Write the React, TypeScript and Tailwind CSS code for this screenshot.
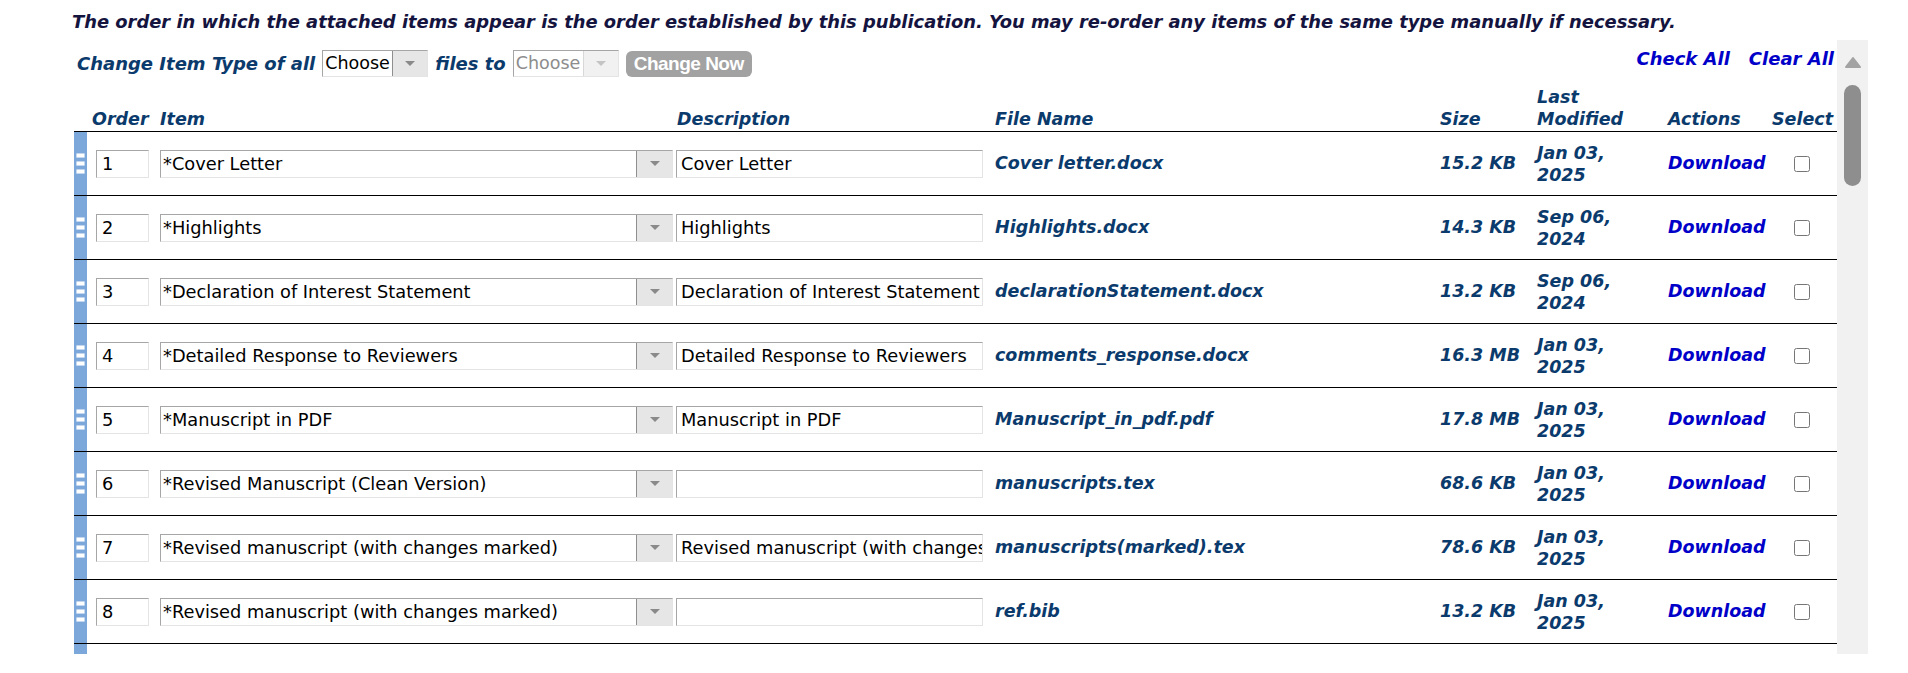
import React from 'react';

type Row = {
  order: string;
  item: string;
  desc: string;
  file: string;
  size: string;
  month: string;
  year: string;
};

const rows: Row[] = [
  { order: '1', item: '*Cover Letter', desc: 'Cover Letter', file: 'Cover letter.docx', size: '15.2 KB', month: 'Jan 03,', year: '2025' },
  { order: '2', item: '*Highlights', desc: 'Highlights', file: 'Highlights.docx', size: '14.3 KB', month: 'Sep 06,', year: '2024' },
  { order: '3', item: '*Declaration of Interest Statement', desc: 'Declaration of Interest Statement', file: 'declarationStatement.docx', size: '13.2 KB', month: 'Sep 06,', year: '2024' },
  { order: '4', item: '*Detailed Response to Reviewers', desc: 'Detailed Response to Reviewers', file: 'comments_response.docx', size: '16.3 MB', month: 'Jan 03,', year: '2025' },
  { order: '5', item: '*Manuscript in PDF', desc: 'Manuscript in PDF', file: 'Manuscript_in_pdf.pdf', size: '17.8 MB', month: 'Jan 03,', year: '2025' },
  { order: '6', item: '*Revised Manuscript (Clean Version)', desc: '', file: 'manuscripts.tex', size: '68.6 KB', month: 'Jan 03,', year: '2025' },
  { order: '7', item: '*Revised manuscript (with changes marked)', desc: 'Revised manuscript (with changes marked)', file: 'manuscripts(marked).tex', size: '78.6 KB', month: 'Jan 03,', year: '2025' },
  { order: '8', item: '*Revised manuscript (with changes marked)', desc: '', file: 'ref.bib', size: '13.2 KB', month: 'Jan 03,', year: '2025' },
];

function Caret({ light }: { light?: boolean }) {
  return (
    <svg width="12" height="7" viewBox="0 0 12 7">
      <polygon points="1,1 11,1 6,6" fill={light ? '#c4c4c4' : '#8a8a8a'} />
    </svg>
  );
}

function FakeSelect({ text, width, disabled }: { text: string; width: string; disabled?: boolean }) {
  return (
    <div
      className={`flex h-[27px] ${width} border border-t-[#a6a6a6] border-l-[#a6a6a6] border-r-[#e4e4e4] border-b-[#e4e4e4] bg-white`}
    >
      <span className={`flex-1 truncate pl-[2px] leading-[25px] ${disabled ? 'text-[#8d8d8d]' : 'text-black'}`}>{text}</span>
      <span
        className={`flex w-[35px] items-center justify-center border-l ${
          disabled ? 'border-l-[#d8d8d8] bg-[#f1f1f1]' : 'border-l-[#8f8f8f] bg-[#e6e6e6]'
        }`}
      >
        <Caret light={disabled} />
      </span>
    </div>
  );
}

const inset =
  'border border-t-[#a6a6a6] border-l-[#a6a6a6] border-r-[#e4e4e4] border-b-[#e4e4e4] bg-white h-[28px] text-[17.8px] text-black outline-none';

function Grip() {
  return (
    <div className="flex flex-col gap-[3px]">
      <span className="block h-[5px] w-[9px] rounded-[1px] border border-[#c3d7ef] bg-white" />
      <span className="block h-[5px] w-[9px] rounded-[1px] border border-[#c3d7ef] bg-white" />
      <span className="block h-[5px] w-[9px] rounded-[1px] border border-[#c3d7ef] bg-white" />
    </div>
  );
}

export default function App() {
  return (
    <div className="h-[673px] w-full overflow-hidden bg-white font-['DejaVu_Sans',Verdana,sans-serif] text-[17.5px]">
      {/* Instruction */}
      <p className="pl-[72px] pt-[11px] text-[17.9px] leading-[22px] font-bold italic text-[#14143f]">
        The order in which the attached items appear is the order established by this publication. You may re-order any items of the same type manually if necessary.
      </p>

      <div className="ml-[74px] mt-[7px] flex h-[614px] w-[1794px]">
        <div className="w-[1763px] overflow-hidden">
          {/* Toolbar */}
          <div className="flex h-[37px] items-start justify-between pt-[10px]">
            <div className="flex items-center gap-[7px] pl-[3px]">
              <span className="text-[18px] font-bold italic leading-[27px] text-[#0b3a6c]">Change Item Type of all</span>
              <FakeSelect text="Choose" width="w-[106px]" />
              <span className="text-[18px] font-bold italic leading-[27px] text-[#0b3a6c]">files to</span>
              <FakeSelect text="Choose" width="w-[106px]" disabled />
              <button className="h-[26px] w-[126px] rounded-[6px] bg-[#a2a2a2] font-['Liberation_Sans',Arial,sans-serif] text-[19px] font-bold leading-[26px] tracking-[-0.5px] text-white">
                Change Now
              </button>
            </div>
            <div className="flex gap-[19px] pr-[3px] text-[18px] leading-[18px] font-bold italic text-[#0000c8]">
              <span>Check All</span>
              <span>Clear All</span>
            </div>
          </div>

          {/* Header */}
          <div className="flex h-[55px] items-end border-b border-black pb-[1px] font-bold italic leading-[22px] text-[#0b3a6c]">
            <div className="w-[13px]" />
            <div className="w-[73px] pl-[5px]">Order</div>
            <div className="w-[516px]">Item</div>
            <div className="w-[319px] pl-[1px]">Description</div>
            <div className="w-[445px]">File Name</div>
            <div className="w-[97px]">Size</div>
            <div className="w-[131px]">
              Last
              <br />
              Modified
            </div>
            <div className="w-[104px]">Actions</div>
            <div className="w-[65px]">Select</div>
          </div>

          {/* Rows */}
          {rows.map((r) => (
            <div key={r.order} className="flex h-[64px] items-center border-b border-black">
              <div className="flex w-[13px] items-center justify-center self-stretch bg-[#7ba7da]">
                <Grip />
              </div>
              <div className="w-[73px] pl-[9px]">
                <input className={`${inset} w-[53px] pl-[5px]`} defaultValue={r.order} />
              </div>
              <div className="w-[516px]">
                <div className="flex h-[28px] w-[513px] border border-t-[#a6a6a6] border-l-[#a6a6a6] border-r-[#e4e4e4] border-b-[#e4e4e4] bg-white">
                  <span className="flex-1 truncate pl-[2px] text-[17.8px] leading-[26px] text-black">{r.item}</span>
                  <span className="flex w-[36px] items-center justify-center border-l border-l-[#8f8f8f] bg-[#e6e6e6]">
                    <Caret />
                  </span>
                </div>
              </div>
              <div className="w-[319px]">
                <input className={`${inset} w-[307px] pl-[4px]`} defaultValue={r.desc} />
              </div>
              <div className="w-[445px] font-bold italic text-[#0b3a6c]">{r.file}</div>
              <div className="w-[97px] font-bold italic text-[#0b3a6c]">{r.size}</div>
              <div className="w-[131px] font-bold italic leading-[22px] text-[#0b3a6c]">
                {r.month}
                <br />
                {r.year}
              </div>
              <div className="w-[104px] font-bold italic text-[#0000c8]">Download</div>
              <div className="flex w-[65px] pl-[22px]">
                <input type="checkbox" className="m-0 h-[16px] w-[16px]" />
              </div>
            </div>
          ))}
          <div className="h-[10px] w-[13px] bg-[#7ba7da]" />
        </div>

        {/* Scrollbar */}
        <div className="flex w-[31px] flex-col items-center bg-[#f1f1f1]">
          <svg className="mt-[16px]" width="18" height="13" viewBox="0 0 18 13">
            <polygon points="9,2 16,11 2,11" fill="#a3a3a3" stroke="#a3a3a3" strokeWidth="2" strokeLinejoin="round" />
          </svg>
          <div className="mt-[16px] h-[101px] w-[17px] rounded-full bg-[#8e8e8e]" />
        </div>
      </div>
    </div>
  );
}
